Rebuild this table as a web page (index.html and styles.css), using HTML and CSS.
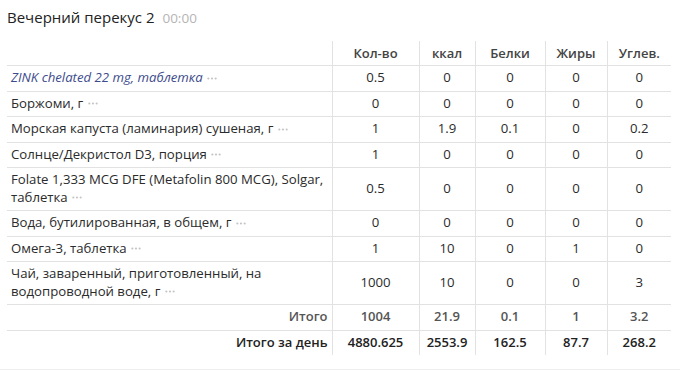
FILE: index.html
```html
<!DOCTYPE html>
<html lang="ru">
<head>
<meta charset="utf-8">
<link rel="stylesheet" href="styles.css">
</head>
<body>
<div class="meal">
  <h2 class="meal-title">Вечерний перекус 2 <span class="meal-time">00:00</span></h2>
  <table class="food-table">
    <colgroup>
      <col class="c-name"><col class="c-qty"><col class="c-kcal"><col class="c-prot"><col class="c-fat"><col class="c-carb">
    </colgroup>
    <thead>
      <tr><th></th><th>Кол-во</th><th>ккал</th><th>Белки</th><th>Жиры</th><th>Углев.</th></tr>
    </thead>
    <tbody>
      <tr><td class="name"><a class="link">ZINK chelated 22 mg, таблетка</a> <svg class="more" viewBox="0 0 11 3"><circle cx="1.5" cy="1.5" r="1.2"/><circle cx="5.5" cy="1.5" r="1.2"/><circle cx="9.5" cy="1.5" r="1.2"/></svg></td><td>0.5</td><td>0</td><td>0</td><td>0</td><td>0</td></tr>
      <tr><td class="name">Боржоми, г <svg class="more" viewBox="0 0 11 3"><circle cx="1.5" cy="1.5" r="1.2"/><circle cx="5.5" cy="1.5" r="1.2"/><circle cx="9.5" cy="1.5" r="1.2"/></svg></td><td>0</td><td>0</td><td>0</td><td>0</td><td>0</td></tr>
      <tr><td class="name">Морская капуста (ламинария) сушеная, г <svg class="more" viewBox="0 0 11 3"><circle cx="1.5" cy="1.5" r="1.2"/><circle cx="5.5" cy="1.5" r="1.2"/><circle cx="9.5" cy="1.5" r="1.2"/></svg></td><td>1</td><td>1.9</td><td>0.1</td><td>0</td><td>0.2</td></tr>
      <tr><td class="name">Солнце/Декристол D3, порция <svg class="more" viewBox="0 0 11 3"><circle cx="1.5" cy="1.5" r="1.2"/><circle cx="5.5" cy="1.5" r="1.2"/><circle cx="9.5" cy="1.5" r="1.2"/></svg></td><td>1</td><td>0</td><td>0</td><td>0</td><td>0</td></tr>
      <tr><td class="name">Folate 1,333 MCG DFE (Metafolin 800 MCG), Solgar, таблетка <svg class="more" viewBox="0 0 11 3"><circle cx="1.5" cy="1.5" r="1.2"/><circle cx="5.5" cy="1.5" r="1.2"/><circle cx="9.5" cy="1.5" r="1.2"/></svg></td><td>0.5</td><td>0</td><td>0</td><td>0</td><td>0</td></tr>
      <tr><td class="name">Вода, бутилированная, в общем, г <svg class="more" viewBox="0 0 11 3"><circle cx="1.5" cy="1.5" r="1.2"/><circle cx="5.5" cy="1.5" r="1.2"/><circle cx="9.5" cy="1.5" r="1.2"/></svg></td><td>0</td><td>0</td><td>0</td><td>0</td><td>0</td></tr>
      <tr><td class="name">Омега-3, таблетка <svg class="more" viewBox="0 0 11 3"><circle cx="1.5" cy="1.5" r="1.2"/><circle cx="5.5" cy="1.5" r="1.2"/><circle cx="9.5" cy="1.5" r="1.2"/></svg></td><td>1</td><td>10</td><td>0</td><td>1</td><td>0</td></tr>
      <tr><td class="name">Чай, заваренный, приготовленный, на водопроводной воде, г <svg class="more" viewBox="0 0 11 3"><circle cx="1.5" cy="1.5" r="1.2"/><circle cx="5.5" cy="1.5" r="1.2"/><circle cx="9.5" cy="1.5" r="1.2"/></svg></td><td>1000</td><td>10</td><td>0</td><td>0</td><td>3</td></tr>
      <tr class="total"><td class="label">Итого</td><td>1004</td><td>21.9</td><td>0.1</td><td>1</td><td>3.2</td></tr>
      <tr class="day-total"><td class="label">Итого за день</td><td>4880.625</td><td>2553.9</td><td>162.5</td><td>87.7</td><td>268.2</td></tr>
    </tbody>
  </table>
</div>
<div class="divider"></div>
</body>
</html>
```

FILE: styles.css
```css
html, body {
  margin: 0;
  padding: 0;
  background: #fff;
}
body {
  font-family: "Open Sans", "Noto Sans", sans-serif;
  color: #2b2b2b;
  font-size: 13.2px;
}
.meal {
  padding: 6px 7px 0 7px;
}
.meal-title {
  margin: 0 0 12px 0;
  font-size: 15px;
  line-height: 22px;
  font-weight: 400;
  color: #222;
}
.meal-time {
  margin-left: 4px;
  font-size: 13.5px;
  color: #b5b5b5;
}
.food-table {
  border-collapse: collapse;
  width: 664px;
  table-layout: fixed;
}
.c-name { width: 325px; }
.c-qty { width: 87px; }
.c-kcal { width: 56px; }
.c-prot { width: 70px; }
.c-fat { width: 62px; }
.c-carb { width: 64px; }
.food-table th {
  font-weight: 600;
  color: #444;
  font-size: 13px;
  line-height: 18px;
  padding: 3px 4px;
  text-align: center;
  border-bottom: 1px solid #e2e2e2;
}
.food-table td {
  line-height: 17.5px;
  padding: 3px 4px 4px 4px;
  text-align: center;
  vertical-align: middle;
  border-bottom: 1px solid #e2e2e2;
}
.food-table th + th,
.food-table td + td {
  border-left: 1px solid #e2e2e2;
}
.food-table td.name {
  text-align: left;
  padding-right: 5px;
}
.link {
  color: #3d4b8c;
  font-style: italic;
}
.more {
  width: 10px;
  height: 3px;
  fill: #c4c4c4;
  vertical-align: middle;
  margin-left: 1px;
}
.total td {
  font-weight: 600;
  color: #555;
  font-size: 13px;
}
.day-total td {
  font-weight: 600;
  color: #222;
  font-size: 13px;
  border-bottom: none;
}
.food-table td.label {
  text-align: right;
}
.divider {
  margin-top: 14px;
  border-top: 1px solid #eeeeee;
}
```
